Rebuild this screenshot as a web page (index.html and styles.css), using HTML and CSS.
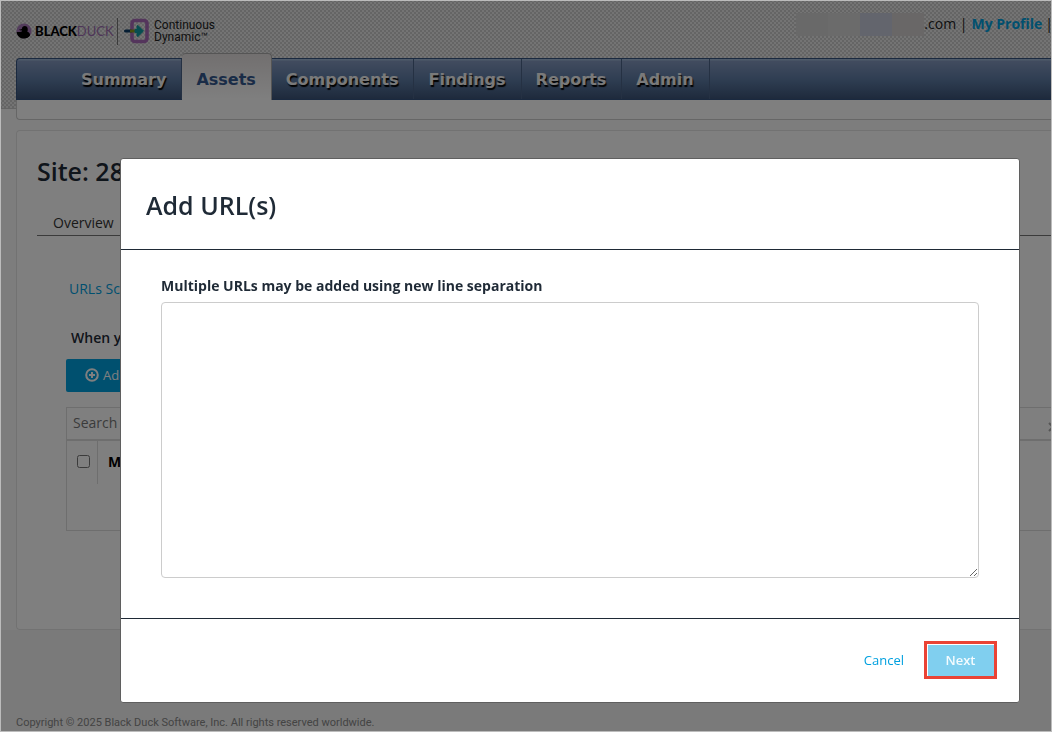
FILE: index.html
```html
<!DOCTYPE html>
<html lang="en">
<head>
    <meta charset="UTF-8">
    <meta name="viewport" content="width=device-width, initial-scale=1.0">
    <title>Continuous Dynamic - Assets</title>
    <link rel="stylesheet" href="styles.css">
</head>
<body>

    <div class="page">
        <header class="header">
            <div class="topbar">
                <div class="logo">
                    <svg class="duck" viewBox="0 0 16 16" width="16" height="16">
                        <circle cx="8" cy="8" r="7.6" fill="#a679b8"/>
                        <path d="M8.800 3c-1.600 0-2.800 1.100-2.800 2.500 0 .6-1.200.9-3 1.100.6.8 1.900 1 3 .9.3.5-.1 1.100-1 1.300C3.300 9.300 1.200 8.700.500 9.500c.9 3.700 4 6.100 7.500 6.100 2.700 0 4.700-1.100 6-3 .3-2.100-.7-3.200-2.700-3.900.6-1 .4-2 .4-2.900C11.700 4.100 10.400 3 8.800 3z" fill="#000"/>
                    </svg>
                    <span class="brand">BLACK<span class="brand-light">DUCK</span></span>
                    <span class="logo-line"></span>
                    <svg class="product-icon" viewBox="0 0 26 26" width="26" height="26">
                        <rect x="8" y="2.500" width="15" height="21" rx="3" fill="none" stroke="#a96bb8" stroke-width="3.600"/>
                        <path d="M1.500 13H7" stroke="#0b3a66" stroke-width="3" stroke-linecap="round"/>
                        <path d="M6 13h5" stroke="#8a9a18" stroke-width="3"/>
                        <path d="M11 11.500h2V8.200c0-.7.8-.9 1.200-.5l5.300 5.300-5.300 5.300c-.4.400-1.200.2-1.200-.5v-3.300h-2z" fill="#0e9aa0" stroke="#0e9aa0"/>
                    </svg>
                    <span class="product">Continuous<br>Dynamic™</span>
                </div>
                <div class="user">
                    <span class="mask"><i></i><i></i><i></i><i></i></span>
                    <span>.com |</span>
                    <a href="#">My Profile</a>
                    <span class="pipe">|</span>
                </div>
            </div>
            <nav class="nav">
                <a href="#">Summary</a>
                <a href="#" class="active">Assets</a>
                <a href="#">Components</a>
                <a href="#">Findings</a>
                <a href="#">Reports</a>
                <a href="#">Admin</a>
            </nav>
        </header>

        <main class="content">
            <div class="subnav"></div>
            <section class="card">
                <h1>Site: 28</h1>
                <div class="tabs"><a href="#">Overview</a></div>
                <div class="panel">
                    <a href="#" class="scan-link">URLs Scan</a>
                    <p class="hint">When you</p>
                    <button class="add-button" type="button">
                        <svg viewBox="0 0 14 14" width="14" height="14" fill="none" stroke="currentColor" stroke-width="2">
                            <circle cx="7" cy="7" r="5.800"/>
                            <path d="M7 4v6M4 7h6"/>
                        </svg>
                        Add
                    </button>
                    <div class="grid">
                        <div class="search">
                            <input type="text" placeholder="Search" aria-label="Search">
                            <button class="clear" type="button" aria-label="Clear">
                                <svg viewBox="0 0 10 10" width="10" height="10" stroke="currentColor" stroke-width="2"><path d="M1 1l8 8M9 1L1 9"/></svg>
                            </button>
                        </div>
                        <table>
                            <tr>
                                <th class="check"><input type="checkbox" aria-label="Select all"></th>
                                <th>M</th>
                            </tr>
                        </table>
                    </div>
                </div>
            </section>
        </main>

        <footer class="footer">Copyright © 2025 Black Duck Software, Inc. All rights reserved worldwide.</footer>
    </div>

    <div class="overlay">
        <form class="modal" role="dialog" aria-labelledby="modal-title">
            <div class="modal-header">
                <h2 id="modal-title">Add URL(s)</h2>
            </div>
            <div class="modal-body">
                <label for="urls">Multiple URLs may be added using new line separation</label>
                <textarea id="urls"></textarea>
            </div>
            <div class="modal-footer">
                <button class="cancel" type="button">Cancel</button>
                <button class="next" type="button">Next</button>
            </div>
        </form>
    </div>

</body>
</html>
```

FILE: styles.css
```css
* {
    box-sizing: border-box;
}
body {
    margin: 0;
    font-family: "Open Sans", "Noto Sans", sans-serif;
    font-size: 14px;
    line-height: 24px;
    color: #1f2a36;
    overflow: hidden;
}
/* thin frame round the window */
body::after {
    content: "";
    position: fixed;
    inset: 0;
    border: 1px solid #bcbcbc;
    z-index: 20;
    pointer-events: none;
}
a {
    color: #00a0df;
    text-decoration: none;
}
button,
input,
textarea {
    font-family: inherit;
}
.page {
    min-height: 100vh;
    display: flex;
    flex-direction: column;
}

/* Header */
.header {
    padding: 0 0 8px 16px;
    background-color: #e9e9e9;
    background-image:
        linear-gradient(45deg, #cbcbcb 25%, transparent 25%, transparent 75%, #cbcbcb 75%),
        linear-gradient(45deg, #cbcbcb 25%, transparent 25%, transparent 75%, #cbcbcb 75%);
    background-size: 4px 4px;
    background-position: 0 0, 2px 2px;
    border-bottom: 1px solid #c8c8c8;
}
.topbar {
    height: 58px;
    padding-top: 4px;
    display: flex;
    justify-content: space-between;
    align-items: center;
}
.logo {
    display: flex;
    align-items: center;
}
.logo > * {
    flex-shrink: 0;
}
.brand {
    margin-left: 3px;
    width: 80px;
    font-family: Lato, sans-serif;
    font-size: 13px;
    font-weight: 900;
    color: #000;
}
.brand-light {
    font-weight: 400;
    color: #9c6bb0;
}
.logo-line {
    width: 1px;
    height: 27px;
    margin: 0 6px 0 2px;
    background: #777;
}
.product {
    margin-left: 4px;
    font-family: Roboto, sans-serif;
    font-size: 12px;
    line-height: 12px;
    color: #222;
}
.user {
    display: flex;
    align-items: center;
    padding-bottom: 14px;
    margin-right: -1px;
    color: #222;
}
.mask {
    display: flex;
}
.mask i {
    width: 32px;
    height: 23px;
    background: #d2d2d2;
}
.mask i:nth-child(2) {
    background: #d6d6d6;
}
.mask i:nth-child(3) {
    background: #c6cada;
}
.mask i:nth-child(4) {
    background: #d2cece;
}
.user a {
    margin: 0 3px 0 4px;
    font-weight: 700;
}

/* Main navigation */
.nav {
    display: flex;
    align-items: flex-end;
    height: 42px;
    padding-left: 50px;
    border: 1px solid #35527e;
    border-right: 0;
    border-radius: 4px 0 0 0;
    background: linear-gradient(#9cb4d2 1px, #8398be 2px, #5f7da6 50%, #3c5478);
    font-family: "DejaVu Sans", sans-serif;
    font-size: 16px;
    font-weight: 700;
}
.nav a {
    height: 40px;
    padding: 0 15px 0 14px;
    line-height: 42px;
    color: #f4f4f4;
    text-shadow: 1px 2px 1px #000;
    border-right: 1px solid #4a6386;
}
.nav .active {
    height: 47px;
    margin-bottom: -1px;
    line-height: 52px;
    color: #34588f;
    text-shadow: none;
    border: 1px solid #aaa;
    border-width: 1px 1px 0 0;
    border-radius: 4px 4px 0 0;
    background: linear-gradient(#e4dfdf, #fff);
}

/* Content */
.content {
    padding-left: 16px;
    background: #fbfbfb;
}
.subnav {
    position: relative;
    height: 20px;
    margin-top: -9px;
    background: #fff;
    border: 1px solid #ccc;
    border-width: 0 0 1px 1px;
    border-radius: 0 0 0 4px;
}
.card {
    margin-top: 10px;
    padding: 20px 0 98px 20px;
    background: #fff;
    border: 1px solid #e4e4e4;
    border-right: 0;
    border-radius: 4px 0 0 4px;
}
.card h1 {
    margin: 0;
    font-size: 25px;
    font-weight: 600;
    line-height: 40px;
}
.tabs {
    margin-top: 20px;
    padding-left: 16px;
    border-bottom: 1px solid #777;
}
.tabs a {
    color: #333;
}
.panel {
    padding: 41px 0 0 29px;
}
.scan-link {
    display: block;
    padding-left: 3px;
}
.hint {
    margin: 25px 0 9px;
    padding-left: 5px;
    font-weight: 600;
}
.add-button {
    display: flex;
    align-items: center;
    gap: 4px;
    height: 33px;
    padding: 0 19px 2px;
    border: 0;
    border-radius: 2px;
    background: #00a0df;
    color: #fff;
    font-size: 13px;
}
.grid {
    margin-top: 15px;
    padding-bottom: 46px;
    border: 1px solid #dcdcdc;
    border-right: 0;
}
.search {
    display: flex;
    align-items: center;
    border-bottom: 2px solid #dcdcdc;
}
.search input {
    flex: 1;
    height: 31px;
    padding: 0 6px 2px;
    border: 0;
    background: none;
    font-size: 14px;
}
.search input::placeholder {
    color: #777;
}
.clear {
    display: flex;
    margin-right: -6px;
    padding: 6px 0 0;
    border: 0;
    background: none;
    color: #aaa;
}
.grid table {
    border-collapse: collapse;
}
.grid th {
    height: 43px;
    padding: 0 10px 2px;
    text-align: left;
    color: #000;
}
.grid .check {
    padding-right: 7px;
    border-right: 1px solid #dcdcdc;
}
.check input {
    display: block;
    width: 13px;
    height: 13px;
    margin: 0;
}
.footer {
    flex: 1;
    display: flex;
    align-items: flex-end;
    padding: 0 16px 1px;
    background: #f4f4f4;
    color: #888;
    font-family: Roboto, sans-serif;
    font-size: 11px;
    line-height: 16px;
}

/* Dialog */
.overlay {
    position: fixed;
    inset: 0;
    z-index: 10;
    padding: 158px 32px 29px 120px;
    background: rgba(0, 0, 0, 0.5);
    overflow: auto;
}
.modal {
    background: #fff;
    border: 1px solid #5f5f5f;
    border-radius: 3px;
}
.modal-header {
    padding: 26px 25px 24px;
    border-bottom: 1px solid #1f2a36;
}
.modal-header h2 {
    margin: 0;
    font-size: 25px;
    font-weight: 600;
    line-height: 40px;
}
.modal-body {
    padding: 24px 40px 40px;
}
.modal-body label {
    display: block;
    margin-bottom: 4px;
    font-weight: 700;
}
.modal-body textarea {
    display: block;
    width: 100%;
    height: 276px;
    padding: 6px;
    border: 1px solid #ccc;
    border-radius: 4px;
    font-size: 14px;
    resize: both;
}
.modal-footer {
    display: flex;
    justify-content: flex-end;
    align-items: center;
    gap: 20px;
    padding: 22px 22px 23px;
    border-top: 1px solid #1f2a36;
}
.modal-footer button {
    padding: 0;
    font-size: 13px;
    cursor: pointer;
}
.cancel {
    border: 0;
    background: none;
    color: #00a0df;
}
.modal-footer .next {
    width: 73px;
    height: 38px;
    border: 3px solid #ea4335;
    background: #80cfef;
    color: #f4fbfe;
    font-weight: 600;
    box-shadow: inset 1px 1px #fff;
}
```
